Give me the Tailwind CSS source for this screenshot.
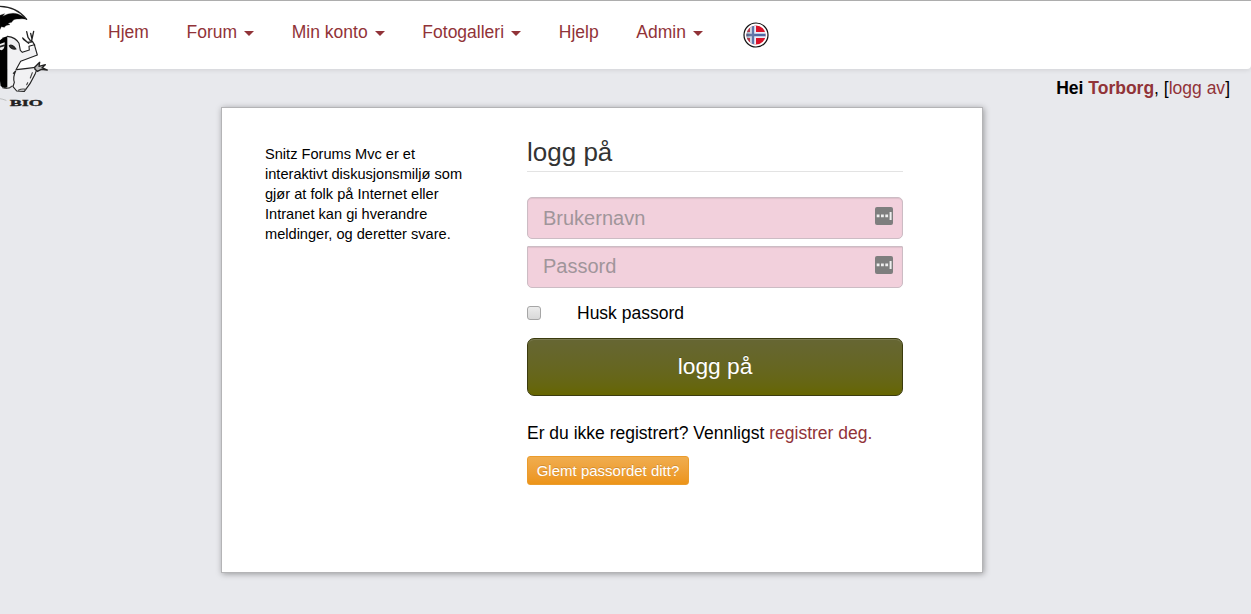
<!DOCTYPE html>
<html lang="no">
<head>
<meta charset="utf-8">
<title>logg på</title>
<script src="https://cdn.jsdelivr.net/npm/@tailwindcss/browser@4"></script>
</head>
<body class="bg-[#e8e9ed] h-[614px] overflow-hidden text-black text-[17.5px] leading-[25px]" style="font-family:'Liberation Sans',Arial,sans-serif">
<header class="relative h-[69px] bg-white border-t border-[#adadad] rounded-br-[4px] shadow-[0_1px_5px_rgba(0,0,0,0.1)]">
  <svg class="absolute left-0 -top-px" width="50" height="110" viewBox="0 0 150 330" fill="none" stroke="#222" stroke-width="3.4" stroke-linejoin="round" stroke-linecap="round">
    <path d="M22 109 L48 116 L61 153 L88 151 L104 134 L112 165 L60 186 L50 210 L110 207 L104 226 L72 274 L45 272 L36 262 L22 262Z" fill="#f1f1f3" stroke="none"/>
    <path d="M0 19 Q50 20 80 58" stroke-width="4"/>
    <path d="M0 46 L14 41 L8 49 Q32 35 54 42 Q68 47 80 58 Q68 55 57 57 Q40 55 35 67 L24 70 L30 74 Q17 74 13 82 L4 80 L0 88Z" fill="#000" stroke-width="1"/>
    <path d="M0 121 Q9 111 22 109 V262 Q12 268 2 258 L0 242Z" fill="#000" stroke="none"/>
    <path d="M0 132 L14 127 Q15 147 5 151 L0 149Z" fill="#eee" stroke="none"/>
    <path d="M0 140 L13 136" stroke-width="5"/>
    <path d="M22 109 Q48 112 57 130 L61 151 L67 157 L88 150 L87 139 L103 134 L112 165 L62 184 L48 209" />
    <path d="M28 137 Q36 131 48 147 Q34 149 28 137Z" fill="#333"/>
    <path d="M68 114 L82 127 L94 126 L101 94 M80 95 L84 112 L91 122 M92 100 L96 117 M70 118 L86 130 M97 124 L104 135" stroke-width="4"/>
    <path d="M50 209 L107 202 M40 220 L47 213 Q38 232 43 247 L39 260 L50 273 L73 274 Q92 252 105 223 L109 212"/>
    <path d="M55 271 Q66 265 77 268 M80 254 L83 248 M8 263 Q24 269 37 258 M97 218 L91 234" stroke="#444"/>
    <path d="M104 202 L119 187 L117 199 L136 194 L126 203 L142 210 L124 208 L112 214 L105 208Z" stroke-width="4" fill="#bbb"/>
    <path d="M0 296 Q8 297 18 301" stroke="#aaa" stroke-width="2"/>
    <text x="29" y="317" textLength="100" lengthAdjust="spacingAndGlyphs" font-family="Liberation Serif,serif" font-weight="bold" font-size="27" fill="#222" stroke="#222" stroke-width="1">BIO</text>
  </svg>
  <nav class="flex items-start pl-[108px] pt-[19px] gap-[37.7px] text-[#913338]">
    <a>Hjem</a>
    <a class="flex items-center gap-[7px]">Forum<svg width="10" height="5" class="mt-[2px]"><path d="M0 0H10L5 5Z" fill="currentColor"/></svg></a>
    <a class="flex items-center gap-[7px]">Min konto<svg width="10" height="5" class="mt-[2px]"><path d="M0 0H10L5 5Z" fill="currentColor"/></svg></a>
    <a class="flex items-center gap-[7px]">Fotogalleri<svg width="10" height="5" class="mt-[2px]"><path d="M0 0H10L5 5Z" fill="currentColor"/></svg></a>
    <a>Hjelp</a>
    <a class="flex items-center gap-[7px]">Admin<svg width="10" height="5" class="mt-[2px]"><path d="M0 0H10L5 5Z" fill="currentColor"/></svg></a>
    <svg class="mt-[1.5px] ml-[2px]" width="26" height="26" viewBox="0 0 26 26">
      <defs><clipPath id="flag"><circle cx="13" cy="13" r="9.6"/></clipPath>
      <linearGradient id="shade"><stop stop-color="#345" stop-opacity=".5"/><stop offset=".5" stop-color="#fff" stop-opacity="0"/></linearGradient></defs>
      <circle cx="13" cy="13" r="12" fill="#fff" stroke="#111" stroke-width="1.2"/>
      <g clip-path="url(#flag)"><path d="M3 3H23V23H3Z" fill="#d8142a"/><path d="M7 3H13V23H7Z M3 10H23V16H3Z" fill="#e9eefa"/><path d="M8.8 3H11.2V23H8.8Z M3 11.8H23V14.2H3Z" fill="#5069a3"/><path d="M3 3H23V23H3Z" fill="url(#shade)"/></g>
    </svg>
  </nav>
</header>
<div class="flex justify-end pr-[21px] pt-[7px] h-[38px]"><p><b>Hei <span class="text-[#913338]">Torborg</span></b>, [<a class="text-[#913338]">logg av</a>]</p></div>
<main class="flex ml-[221px] w-[762px] h-[466px] bg-white border border-[#b4b4b6] shadow-[1px_1px_6px_rgba(0,0,0,0.35)]">
  <p class="ml-[43px] mt-[36px] w-[262px] text-[14.6px] leading-5 whitespace-nowrap">Snitz Forums Mvc er et<br>interaktivt diskusjonsmiljø som<br>gjør at folk på Internet eller<br>Intranet kan gi hverandre<br>meldinger, og deretter svare.</p>
  <form class="w-[376px] pt-[26px]">
    <h1 class="text-[26px] leading-[36px] h-[38px] border-b border-[#e3e3e3] text-[#333]">logg på</h1>
    <div class="mt-[25px] h-[42px] flex items-center justify-between pl-[15px] pr-[9px] rounded-[5px] border border-[#ccbcc4] bg-[#f2d0dc] text-[20px] text-[#a0959a] shadow-[inset_0_1px_1px_rgba(0,0,0,0.08)]">Brukernavn
      <svg class="-mt-[4px]" width="18" height="18"><rect width="18" height="18" rx="2" fill="#7e7e7e"/><path d="M1.7 7.5h2.8v2.8H1.7zM6 7.5h2.8v2.8H6zM10.3 7.5h2.8v2.8h-2.8zM14.6 5h2v8h-2z" fill="#eee"/></svg></div>
    <div class="mt-[7px] h-[42px] flex items-center justify-between pl-[15px] pr-[9px] rounded-b-[5px] rounded-t-[1px] border border-[#ccbcc4] bg-[#f2d0dc] text-[20px] text-[#a0959a] shadow-[inset_0_1px_1px_rgba(0,0,0,0.08)]"><span class="-mt-[2px]">Passord</span>
      <svg class="-mt-[4px]" width="18" height="18"><rect width="18" height="18" rx="2" fill="#7e7e7e"/><path d="M1.7 7.5h2.8v2.8H1.7zM6 7.5h2.8v2.8H6zM10.3 7.5h2.8v2.8h-2.8zM14.6 5h2v8h-2z" fill="#eee"/></svg></div>
    <label class="flex items-center mt-[12px] h-[26px]"><span class="w-[14px] h-[14px] mr-[36px] rounded-[3px] border border-[#a6a6a6] bg-linear-to-b from-[#ececec] to-[#d8d8d8]"></span>Husk passord</label>
    <button type="button" class="block mt-[12px] w-full h-[58px] pb-[2px] rounded-[7px] border border-[#3b3b0e] bg-linear-to-b from-[#666633] to-[#666600] text-white text-[22.75px] shadow-[inset_0_1px_0_rgba(255,255,255,0.15)] [text-shadow:0_-1px_0_rgba(0,0,0,0.2)]">logg på</button>
    <p class="mt-[25px] whitespace-nowrap">Er du ikke registrert? Vennligst <a class="text-[#913338]">registrer deg.</a></p>
    <button type="button" class="block mt-[10px] w-[162px] h-[29px] rounded-[3px] border border-[#eb9c2c] bg-linear-to-b from-[#f0ad4e] to-[#ec9417] text-white text-[15px] leading-5 whitespace-nowrap [text-shadow:0_-1px_0_rgba(0,0,0,0.15)]">Glemt passordet ditt?</button>
  </form>
</main>
</body>
</html>
